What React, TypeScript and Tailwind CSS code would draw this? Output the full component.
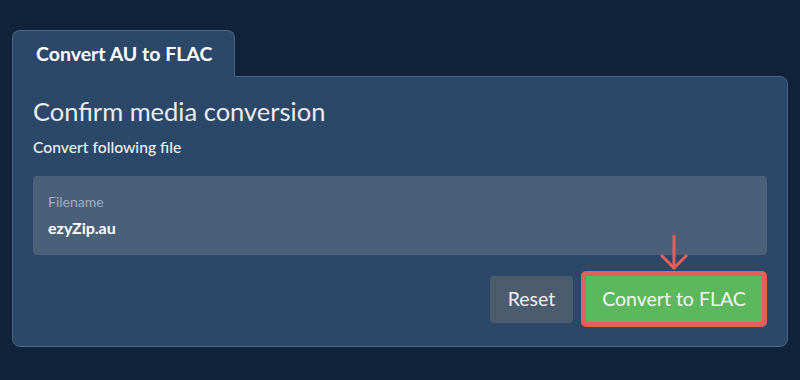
import React from "react";

export default function App() {
  return (
    <div
      className="w-[800px] h-[380px] bg-[#10233a] pt-[30px] px-[12px]"
      style={{ fontFamily: "Lato, 'Noto Sans', sans-serif" }}
    >
      <div className="w-[776px]">
        <div className="flex">
          <div className="relative z-10 -mb-px w-[223px] h-[47px] flex items-center pl-[23px] bg-[#2c4868] border border-b-0 border-[#4b6482] rounded-t-[8px] text-white font-bold text-[19.5px]">
            Convert AU to FLAC
          </div>
        </div>
        <div className="bg-[#2c4868] border border-[#4b6482] rounded-b-[8px] rounded-tr-[8px] px-[20px] pt-[18px] pb-[19px]">
          <h1 className="text-[25.5px] leading-[32px] text-[#e9ecf0] font-normal">
            Confirm media conversion
          </h1>
          <p className="mt-[10px] text-[15.7px] leading-[20px] text-[#eef0f3] font-medium">
            Convert following file
          </p>
          <div className="mt-[19px] h-[79px] bg-[#4a6079] rounded-[4px] px-[15px] pt-[16px]">
            <div className="text-[14px] leading-[19px] text-[#a3afbd]">Filename</div>
            <div className="mt-[7px] text-[16px] leading-[20px] text-white font-bold">ezyZip.au</div>
          </div>
          <div className="mt-[16px] flex justify-end items-center gap-[8px]">
            <button className="h-[47px] w-[83px] rounded-[4px] bg-[#4b5c6e] text-[19.5px] text-[#eef0f3]">
              Reset
            </button>
            <div className="relative border-[5px] border-[#e0605a] rounded-[5px]">
              <svg
                className="absolute left-1/2 -translate-x-1/2 -top-[42px]"
                width="30"
                height="38"
                viewBox="0 0 30 38"
                fill="none"
                stroke="#e0605a"
                strokeWidth="3"
              >
                <line x1="15" y1="1" x2="15" y2="35" />
                <polyline points="2,21 15,34 28,21" />
              </svg>
              <button className="h-[46px] w-[176px] bg-[#5cb85c] text-[19.5px] text-[#f4f6f4] block">
                Convert to FLAC
              </button>
            </div>
          </div>
        </div>
      </div>
    </div>
  );
}
